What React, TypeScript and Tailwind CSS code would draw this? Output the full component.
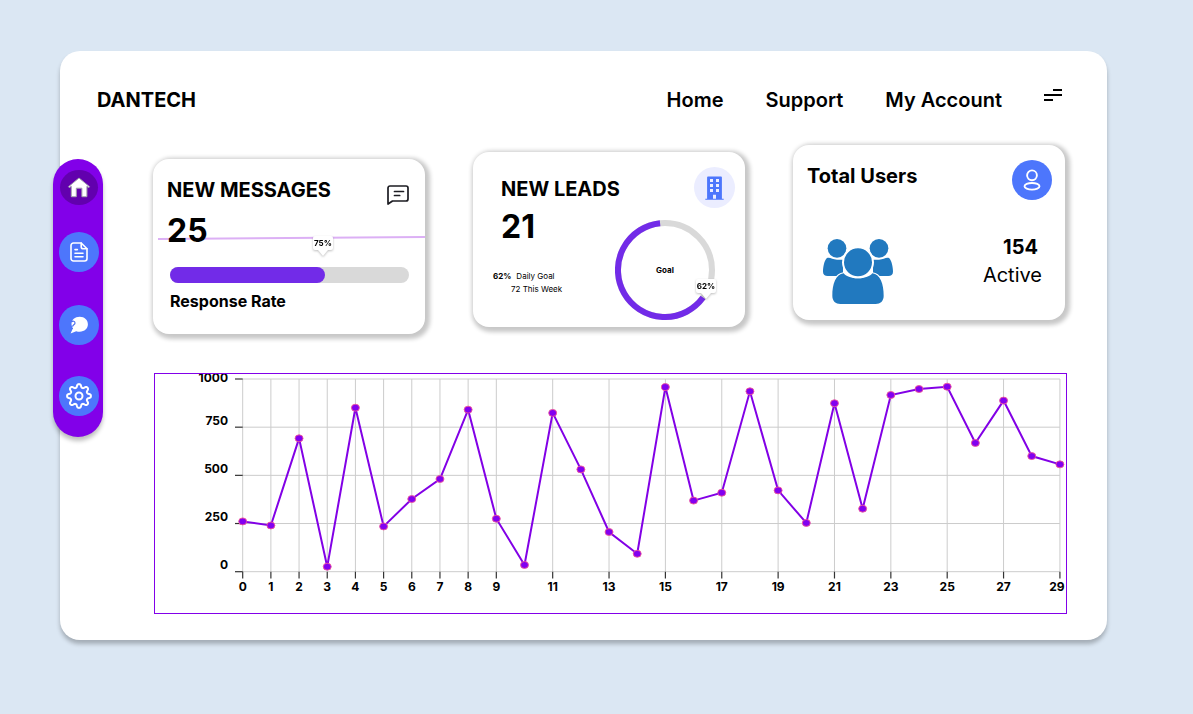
import type { ReactNode } from "react";

const values = [
  261, 240, 692, 26, 851, 235, 377, 481, 841, 275, 35, 824, 531, 206, 93, 958, 369, 410, 936, 422, 253, 874, 327, 917,
  948, 960, 668, 888, 600, 557,
];
const xTicks = [0, 1, 2, 3, 4, 5, 6, 7, 8, 9, 11, 13, 15, 17, 19, 21, 23, 25, 27, 29];
const yTicks = [0, 250, 500, 750, 1000];

const px = (i: number) => 87.7 + i * 28.18;
const py = (v: number) => 197.7 - v * 0.1927;

function LineChart() {
  return (
    <svg viewBox="0 0 911 239" className="block h-auto w-full" role="img" aria-label="Values by day">
      <g stroke="#cccccc" strokeWidth="1">
        {yTicks.map((v) => (
          <line key={v} x1={px(0)} x2={px(29)} y1={py(v)} y2={py(v)} />
        ))}
        {xTicks.map((i) => (
          <line key={i} x1={px(i)} x2={px(i)} y1={py(0)} y2={py(1000)} />
        ))}
      </g>
      <g stroke="#333333" strokeWidth="1.2">
        {yTicks.map((v) => (
          <line key={v} x1="80" x2={px(0)} y1={py(v)} y2={py(v)} />
        ))}
        {xTicks.map((i) => (
          <line key={i} x1={px(i)} x2={px(i)} y1={py(0)} y2="204.5" />
        ))}
      </g>
      <g className="fill-black text-[12px] font-bold">
        {yTicks.map((v) => (
          <text key={v} x="73" y={v === 1000 ? 8 : py(v) - 2.5} textAnchor="end">
            {v}
          </text>
        ))}
        {xTicks.map((i) => (
          <text key={i} x={i === 29 ? 902 : px(i)} y="217" textAnchor="middle">
            {i}
          </text>
        ))}
      </g>
      <polyline
        points={values.map((v, i) => `${px(i)},${py(v)}`).join(" ")}
        fill="none"
        stroke="#8200e6"
        strokeWidth="2"
      />
      {values.map((v, i) => (
        <ellipse key={i} cx={px(i)} cy={py(v)} rx="4" ry="3.5" fill="#8200f0" stroke="#f0569a" strokeWidth="0.9" />
      ))}
    </svg>
  );
}

function HomeIcon() {
  return (
    <svg viewBox="0 0 24 21" className="h-[21px] w-6" fill="#ffffff" stroke="#a3a3ad" strokeWidth="1" aria-hidden="true">
      <path d="M12 1 22.500 9.700l-.7.9-1.900-1.300v10.400h-5v-8.500H9.300v8.500h-5V9.300l-2 1.300-.8-.9z" />
    </svg>
  );
}

function DocumentIcon() {
  return (
    <svg
      viewBox="0 0 18 20"
      className="h-5 w-[18px]"
      fill="none"
      stroke="#ffffff"
      strokeWidth="1.6"
      strokeLinecap="round"
      strokeLinejoin="round"
      aria-hidden="true"
    >
      <path d="M11.200 1H3.400A2.400 2.400 0 0 0 1 3.400v13.200A2.400 2.400 0 0 0 3.400 19h11.200a2.400 2.400 0 0 0 2.400-2.400V6.800z" />
      <path d="M11.200 1v3.700c0 1.300.8 2.100 2.100 2.100H17M5 7.600h2.400M5 11.200h8M5 14.800h8" />
    </svg>
  );
}

function BubbleIcon() {
  return (
    <svg viewBox="0 0 18 18" className="h-[18px] w-[18px]" aria-hidden="true">
      <path
        d="M9.700.8C4.900.8 1.500 3.700 1.500 7.700c0 1.900.6 3.300 1.400 4.500L.6 17.400l5.600-2.200c1.100.4 2.200.5 3.500.5 4.900 0 8.200-3.200 8.200-7.400S14.600.8 9.700.8z"
        fill="#ffffff"
      />
      <path d="M1.400 6.100c1-1.400 3.600-1.100 3.600.8 0 1.700-2.300 1.900-2.500 3.700M2.400 12.300v.8" fill="none" stroke="#4a6cf0" strokeWidth="1.200" />
    </svg>
  );
}

const gearOutline =
  Array.from({ length: 160 }, (_, i) => {
    const a = (i / 160) * Math.PI * 2;
    const r = 10.3 + (1.6 * Math.tanh(1.5 * Math.cos(8 * a))) / Math.tanh(1.5);
    return `${i ? "L" : "M"}${(13 + r * Math.cos(a)).toFixed(2)} ${(13 + r * Math.sin(a)).toFixed(2)}`;
  }).join("") + "Z";

function GearIcon() {
  return (
    <svg viewBox="0 0 26 26" className="size-[26px]" fill="none" stroke="#ffffff" strokeWidth="2" aria-hidden="true">
      <path d={gearOutline} strokeLinejoin="round" />
      <circle cx="13" cy="13" r="3.500" />
    </svg>
  );
}

function MessageIcon() {
  return (
    <svg
      viewBox="0 0 22 20"
      className="h-5 w-[22px]"
      fill="none"
      stroke="#1c1c22"
      strokeWidth="1.700"
      strokeLinecap="round"
      strokeLinejoin="round"
      aria-hidden="true"
    >
      <path d="M1 19V3a2 2 0 0 1 2-2h16a2 2 0 0 1 2 2v11a2 2 0 0 1-2 2H5.500z" />
      <path d="M7.500 6.500h9M7.500 10.500h5.200" />
    </svg>
  );
}

function BuildingIcon() {
  return (
    <svg viewBox="0 0 19 24" className="h-6 w-[19px]" aria-hidden="true">
      <path
        fillRule="evenodd"
        fill="#4d76fc"
        d="M3 .5h13a.9.9 0 0 1 .9.9v21.300h1.800v1H.3v-1h1.800V1.400A.9.9 0 0 1 3 .5zM5 3v3h3V3zm6 0v3h3V3zM5 8v3h3V8zm6 0v3h3V8zm-6 5v3h3v-3zm6 0v3h3v-3zM8 18.800v4h3v-4z"
      />
    </svg>
  );
}

function PersonIcon() {
  return (
    <svg viewBox="0 0 18 22" className="h-[22px] w-[18px]" fill="none" stroke="#ffffff" strokeWidth="1.900" aria-hidden="true">
      <circle cx="9" cy="6.300" r="4.900" />
      <ellipse cx="9" cy="17.300" rx="7.500" ry="3.300" />
    </svg>
  );
}

function PeopleIcon() {
  return (
    <svg viewBox="0 0 210 195" className="h-[65px] w-[70px]" fill="#2179bf" aria-hidden="true">
      <circle cx="42" cy="28" r="28" />
      <circle cx="168" cy="28" r="28" />
      <path d="M12 57C4 64 0 84 0 98c0 9 6 13 14 13h46V62H42c-14 0-20-8-30-5z" />
      <path d="M198 57c8 7 12 27 12 41 0 9-6 13-14 13h-46V62h18c14 0 20-8 30-5z" />
      <path
        d="M62 103c15 20 71 20 86 0 24 3 34 32 34 68 0 15-10 24-24 24H52c-14 0-24-9-24-24 0-36 10-65 34-68z"
        stroke="#ffffff"
        strokeWidth="6"
        paintOrder="stroke"
      />
      <circle cx="105" cy="70" r="45" stroke="#ffffff" strokeWidth="6" />
    </svg>
  );
}

function Callout({ children }: { children: ReactNode }) {
  return (
    <span className="relative flex h-[14px] w-5 items-center justify-center rounded-xs bg-white text-[8px] font-bold drop-shadow-[0_1px_1px_rgba(0,0,0,0.25)]">
      {children}
      <svg viewBox="0 0 10 6" className="absolute top-full left-1/2 h-[6px] w-[10px] -translate-x-1/2" aria-hidden="true">
        <path d="M0 0h10L5 6z" fill="#ffffff" />
      </svg>
    </span>
  );
}

function Card({ className, children }: { className: string; children: ReactNode }) {
  return (
    <section className={`h-[175px] rounded-2xl bg-white shadow-[2px_2px_4px_3px_rgba(0,0,0,0.22)] ${className}`}>
      {children}
    </section>
  );
}

const railButton = "flex size-10 items-center justify-center rounded-full bg-[#4d76fc]";

export default function App() {
  return (
    <div className="min-h-screen bg-[#dbe7f3] pt-[51px] pr-[86px] pb-[74px] pl-[60px] font-['Inter',sans-serif] text-black">
      <div className="rounded-[20px] bg-white pt-[35px] pb-[26px] shadow-[0_4px_4px_rgba(0,0,0,0.25)]">
        <header className="flex items-center justify-between pr-[45px] pl-[37px] text-xl leading-7">
          <h1 className="font-bold">DANTECH</h1>
          <nav className="flex gap-[42px] font-semibold">
            <a href="#home">Home</a>
            <a href="#support">Support</a>
            <a href="#account">My Account</a>
            <button type="button" aria-label="Menu" className="mb-[10px]">
              <svg viewBox="0 0 18 12" className="h-3 w-[18px]" stroke="#000000" strokeWidth="2" aria-hidden="true">
                <path d="M9 1h9M0 6h18M0 11h9" />
              </svg>
            </button>
          </nav>
        </header>

        <div className="mt-[31px] flex items-start gap-[50px] pr-10">
          <aside className="mt-[14px] -ml-[7px] flex w-[50px] shrink-0 flex-col items-center rounded-full bg-[#8200e9] pt-[11px] pb-[21px] pl-[2px] shadow-[0_4px_4px_rgba(0,0,0,0.25)]">
            <button type="button" aria-label="Dashboard" className="flex h-[35px] w-[38px] items-center justify-center rounded-[50%] bg-[#6200ae]">
              <HomeIcon />
            </button>
            <button type="button" aria-label="Documents" className={`mt-[27px] ${railButton}`}>
              <DocumentIcon />
            </button>
            <button type="button" aria-label="Chat" className={`mt-[33px] ${railButton}`}>
              <BubbleIcon />
            </button>
            <button type="button" aria-label="Settings" className={`mt-[31px] ${railButton}`}>
              <GearIcon />
            </button>
          </aside>

          <main className="min-w-0 flex-1">
            <div className="grid grid-cols-3 gap-12 pr-[2px]">
              <Card className="relative mt-[14px] pt-[17px] pr-4 pl-[14px]">
                <svg
                  viewBox="0 0 268 4"
                  preserveAspectRatio="none"
                  className="absolute top-[77px] right-0 left-[5px] h-1 w-[calc(100%-5px)]"
                  aria-hidden="true"
                >
                  <path d="M0 3 268 1" stroke="#dcb0f5" strokeWidth="2" />
                </svg>
                <div className="relative flex items-start justify-between">
                  <h2 className="text-xl leading-7 font-bold whitespace-nowrap">NEW MESSAGES</h2>
                  <span className="mt-[9px]">
                    <MessageIcon />
                  </span>
                </div>
                <p className="relative mt-[6px] text-[32px] leading-10 font-bold">25</p>
                <div className="relative mt-4 ml-[3px] h-4 rounded-full bg-[#d9d9d9]">
                  <div className="h-full w-[65%] rounded-full bg-[#722be8]" />
                  <div className="absolute bottom-[33px] left-[64%] -translate-x-1/2">
                    <Callout>75%</Callout>
                  </div>
                </div>
                <p className="mt-[6px] ml-[3px] text-base leading-6 font-bold">Response Rate</p>
              </Card>

              <Card className="mt-[7px] mb-[7px] flex justify-between pr-[10px] pl-5">
                <div className="w-0 pt-[23px] whitespace-nowrap">
                  <h2 className="pl-2 text-xl leading-7 font-bold">NEW LEADS</h2>
                  <p className="mt-1 pl-2 text-[32px] leading-10 font-bold">21</p>
                  <p className="mt-[23px] flex gap-[5px] text-[8px] leading-[13px]">
                    <b className="font-bold">62%</b>
                    <span>Daily Goal</span>
                  </p>
                  <p className="pl-[18px] text-[8px] leading-[13px]">72 This Week</p>
                </div>
                <div className="flex flex-col items-end pt-[15px]">
                  <span className="flex size-[41px] items-center justify-center rounded-full bg-[#ebedff]">
                    <BuildingIcon />
                  </span>
                  <div className="relative mt-3 mr-5 flex size-[100px] items-center justify-center">
                    <svg viewBox="0 0 100 100" className="absolute inset-0 size-full" fill="none" strokeWidth="6" aria-hidden="true">
                      <circle cx="50" cy="50" r="47" stroke="#d9d9d9" />
                      <path d="M45.1 3.250A47 47 0 1 0 88 77.600" stroke="#722be8" />
                    </svg>
                    <span className="text-[8px] font-bold">Goal</span>
                    <div className="absolute top-[59px] -right-px">
                      <Callout>62%</Callout>
                    </div>
                  </div>
                </div>
              </Card>

              <Card className="pt-[15px] pr-[13px] pl-[14px]">
                <div className="flex items-start justify-between">
                  <h2 className="pt-[2px] text-xl leading-7 font-bold">Total Users</h2>
                  <span className="flex size-10 items-center justify-center rounded-full bg-[#4d76fc]">
                    <PersonIcon />
                  </span>
                </div>
                <div className="mt-[33px] flex items-start justify-between pr-[10px] pl-4">
                  <span className="pt-[6px]">
                    <PeopleIcon />
                  </span>
                  <p className="text-right text-xl leading-7">
                    <b className="block pr-1 font-bold">154</b>
                    Active
                  </p>
                </div>
              </Card>
            </div>

            <section className="mt-[39px] ml-px border border-[#8200e9]">
              <LineChart />
            </section>
          </main>
        </div>
      </div>
    </div>
  );
}
